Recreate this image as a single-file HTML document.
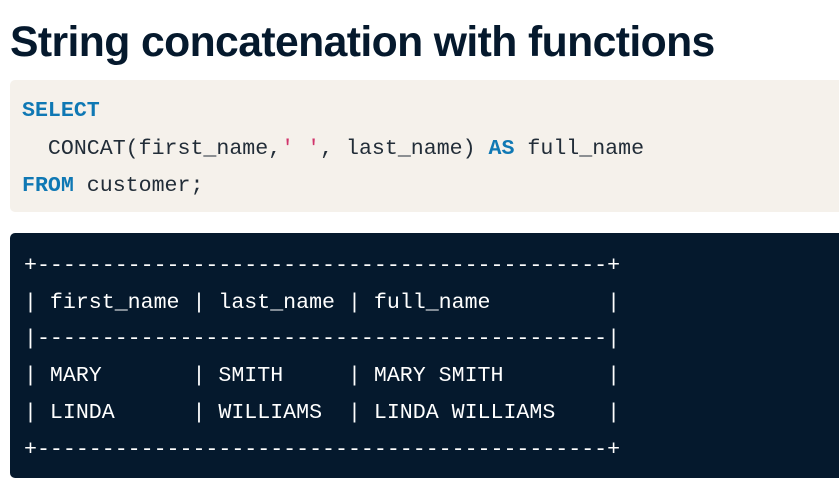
<!DOCTYPE html>
<html><head><meta charset="utf-8"><style>
html,body{margin:0;padding:0;background:#fff;width:839px;height:499px;overflow:hidden}
h1{position:absolute;left:10px;top:16px;margin:0;font:bold 42.7px/52px "Liberation Sans",sans-serif;color:#05192d;letter-spacing:-0.6px;white-space:nowrap}
.code{position:absolute;left:10px;top:80px;width:840px;height:132px;background:#f5f1eb;border-radius:5px}
.dark{position:absolute;left:10px;top:233px;width:840px;height:245px;background:#05192d;border-radius:5px}
pre{margin:0;position:absolute;font-family:"Liberation Mono","DejaVu Sans Mono",monospace;font-size:21.6px;white-space:pre}
.code pre{left:12px;top:13px;line-height:37.5px;color:#222d38}
.dark pre{left:14px;top:15px;line-height:36.7px;color:#fff}
.k{color:#0f78b4;font-weight:bold}.s{color:#d1346b}
</style></head><body>
<h1>String concatenation with functions</h1>
<div class="code"><pre><span class="k">SELECT</span>
  CONCAT(first_name,<span class="s">' '</span>, last_name) <span class="k">AS</span> full_name
<span class="k">FROM</span> customer;</pre></div>
<div class="dark"><pre>+--------------------------------------------+
| first_name | last_name | full_name         |
|--------------------------------------------|
| MARY       | SMITH     | MARY SMITH        |
| LINDA      | WILLIAMS  | LINDA WILLIAMS    |
+--------------------------------------------+</pre></div>
</body></html>
